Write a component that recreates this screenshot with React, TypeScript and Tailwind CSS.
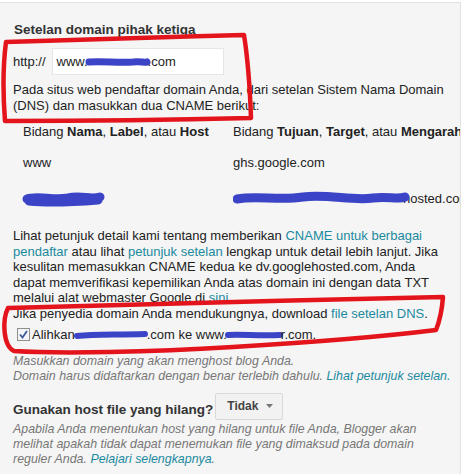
import React from "react";

const Scribble = ({ w, h, d, sw = 6 }: { w: number; h: number; d: string; sw?: number }) => (
  <svg width={w} height={h} viewBox={`0 0 ${w} ${h}`} className="inline-block align-middle overflow-visible shrink-0">
    <path d={d} fill="none" stroke="#3b44c6" strokeWidth={sw} strokeLinecap="round" strokeLinejoin="round" />
  </svg>
);

const Link = ({ children }: { children: React.ReactNode }) => <span className="text-[#1b8aa0]">{children}</span>;

export default function App() {
  return (
    <div className="relative w-[466px] h-[474px] bg-white overflow-hidden font-['Liberation_Sans',Arial,sans-serif] text-[13px] text-[#222]">
      <div className="mt-[2px] w-[461px] h-[472px] bg-[#f5f5f5] border-t border-r border-[#e2e2e2] pl-[13px] pt-[18px] overflow-hidden">
        <div className="text-[13.5px] leading-[18px] font-bold text-[#333] pl-[1px]">Setelan domain pihak ketiga</div>

        <div className="mt-[9px] flex items-center h-[27px]">
          <span className="leading-[16px]">http://</span>
          <div className="ml-[6px] w-[172px] h-[27px] bg-white border border-[#e6e6e6] flex items-center pl-[4px] leading-[16px]">
            <span>www.</span>
            <Scribble w={60} h={10} d="M1 5 C 15 4, 30 6, 45 5 C 52 4, 57 6, 59 5" sw={7} />
            <span>.com</span>
          </div>
        </div>

        <div className="mt-[7px] leading-[16px] whitespace-nowrap">
          Pada situs web pendaftar domain Anda, dari setelan Sistem Nama Domain
          <br />
          (DNS) dan masukkan dua CNAME berikut:
        </div>

        <div className="mt-[10px] grid grid-cols-[210px_1fr] pl-[10px] leading-[16px] whitespace-nowrap">
          <div>
            Bidang <b>Nama</b>, <b>Label</b>, atau <b>Host</b>
          </div>
          <div>
            Bidang <b>Tujuan</b>, <b>Target</b>, atau <b>Mengarah ke</b>
          </div>
          <div className="mt-[15px]">www</div>
          <div className="mt-[15px]">ghs.google.com</div>
          <div className="mt-[20px] h-[16px] flex items-center">
            <Scribble w={80} h={14} d="M4 7 C 15 3, 30 9, 45 6 C 58 3, 68 8, 77 5 M6 9 C 25 11, 50 10, 75 8" sw={9} />
          </div>
          <div className="mt-[20px] h-[16px] relative">
            <span className="pl-[170px]">hosted.com</span>
            <svg width="180" height="20" viewBox="0 0 180 20" className="absolute left-0 top-[-2px]">
              <path
                d="M4 10 C 25 6, 45 12, 70 8 C 95 5, 120 12, 140 9 C 155 7, 165 11, 172 8"
                fill="none"
                stroke="#3b44c6"
                strokeWidth="9"
                strokeLinecap="round"
              />
            </svg>
          </div>
        </div>

        <div className="mt-[21px] leading-[15.6px] whitespace-nowrap">
          Lihat petunjuk detail kami tentang memberikan <Link>CNAME untuk berbagai</Link>
          <br />
          <Link>pendaftar</Link> atau lihat <Link>petunjuk setelan</Link> lengkap untuk detail lebih lanjut. Jika
          <br />
          kesulitan memasukkan CNAME kedua ke dv.googlehosted.com, Anda
          <br />
          dapat memverifikasi kepemilikan Anda atas domain ini dengan data TXT
          <br />
          melalui alat webmaster Google di <Link>sini</Link>.
          <br />
          Jika penyedia domain Anda mendukungnya, download <Link>file setelan DNS</Link>.
        </div>
        <div className="mt-[5px] flex items-center h-[16px] leading-[16px] pl-[4px] whitespace-nowrap">
          <span className="w-[13px] h-[13px] border border-[#8e8f8f] bg-[#f4f4f4] flex items-center justify-center mr-[2px] shrink-0">
            <svg width="11" height="11" viewBox="0 0 11 11">
              <path d="M2 5.5 L4.5 8.5 L9 2" fill="none" stroke="#3d5a9a" strokeWidth="1.8" />
            </svg>
          </span>
          <span>Alihkan</span>
          <Scribble w={72} h={8} d="M2 5 C 20 3, 40 4, 70 3" sw={6} />
          <span>.com ke www.</span>
          <Scribble w={54} h={8} d="M1 4 C 15 3, 30 5, 53 4" sw={6} />
          <span>r.com.</span>
        </div>

        <div className="mt-[11px] italic text-[12.4px] text-[#777] leading-[15.5px] whitespace-nowrap">
          <div>Masukkan domain yang akan menghost blog Anda.</div>
          <div>
            Domain harus didaftarkan dengan benar terlebih dahulu. <Link>Lihat petunjuk setelan.</Link>
          </div>
        </div>

        <div className="mt-[8px] flex items-start">
          <span className="mt-[9px] text-[13.5px] leading-[16px] font-bold text-[#333]">Gunakan host file yang hilang?</span>
          <div className="ml-[2px] w-[68px] h-[27px] rounded-[2px] border border-[#d9d9d9] bg-[#f2f2f2] flex items-center pl-[11px] text-[12px] leading-[14px] font-bold text-[#444]">
            Tidak
            <svg width="7" height="4" viewBox="0 0 7 4" className="ml-[8px]">
              <path d="M0 0 L7 0 L3.5 4 Z" fill="#777" />
            </svg>
          </div>
        </div>

        <div className="mt-[2px] italic text-[12.4px] text-[#777] leading-[15px] whitespace-nowrap">
          Apabila Anda menentukan host yang hilang untuk file Anda, Blogger akan
          <br />
          melihat apakah tidak dapat menemukan file yang dimaksud pada domain
          <br />
          reguler Anda. <Link>Pelajari selengkapnya</Link>.
        </div>
      </div>

      <svg className="absolute inset-0 pointer-events-none" width="466" height="474" viewBox="0 0 466 474">
        <path
          d="M6 42 C 70 40, 160 37, 244 35 C 248 60, 250 90, 251 118 C 170 120, 80 121, 5 121 C 3 95, 3 65, 6 42 Z"
          fill="none"
          stroke="#e3141b"
          strokeWidth="4.5"
          strokeLinejoin="round"
        />
        <path
          d="M8 308 C 100 305, 300 300, 443 297 C 442 310, 440 320, 436 330 C 380 337, 300 343, 233 347 C 150 352, 60 354, 14 351 C 3 346, 2 320, 8 308 Z"
          fill="none"
          stroke="#e3141b"
          strokeWidth="4.5"
          strokeLinejoin="round"
        />
      </svg>
    </div>
  );
}
